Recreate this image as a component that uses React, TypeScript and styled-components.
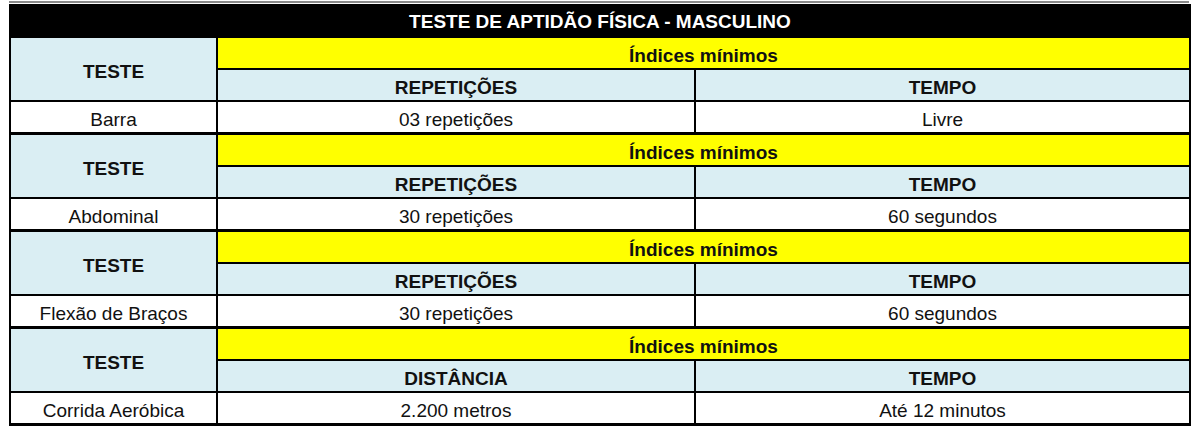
import styled, { createGlobalStyle } from "styled-components";

const GlobalStyle = createGlobalStyle`
  html, body {
    margin: 0;
    padding: 0;
    background: #ffffff;
  }
  body {
    font-family: "Liberation Sans", Arial, sans-serif;
    color: #111;
  }
`;

const Sheet = styled.div`
  width: 1180px;
  padding: 1px 0 0 9px;
`;

const TopRule = styled.div`
  height: 2px;
  background: #8a8a8a;
  margin-bottom: 1px;
`;

const Table = styled.table`
  width: 1180px;
  border-collapse: collapse;
  table-layout: fixed;
  font-size: 19px;
  line-height: 22px;
`;

const TitleCell = styled.th`
  background: #000;
  color: #fff;
  font-weight: bold;
  height: 26px;
  padding: 3px 0 0;
  border: 2px solid #000;
  text-align: center;
`;

const Cell = styled.td<{ $bg?: string; $bold?: boolean; $groupTop?: boolean; $last?: boolean }>`
  background: ${(p) => p.$bg ?? "#fff"};
  font-weight: ${(p) => (p.$bold ? "bold" : "normal")};
  text-align: center;
  vertical-align: middle;
  height: 24px;
  padding: 6px 0 0;
  border: 2px solid #000;
  border-top-width: ${(p) => (p.$groupTop ? "3px" : "2px")};
  border-bottom-width: ${(p) => (p.$last ? "3px" : "2px")};
  white-space: nowrap;
`;

const BLUE = "#daeef3";
const YELLOW = "#ffff00";

type Test = {
  name: string;
  measure: string;
  value: string;
  time: string;
};

const tests: Test[] = [
  { name: "Barra", measure: "REPETIÇÕES", value: "03 repetições", time: "Livre" },
  { name: "Abdominal", measure: "REPETIÇÕES", value: "30 repetições", time: "60 segundos" },
  { name: "Flexão de Braços", measure: "REPETIÇÕES", value: "30 repetições", time: "60 segundos" },
  { name: "Corrida Aeróbica", measure: "DISTÂNCIA", value: "2.200 metros", time: "Até 12 minutos" },
];

function TestGroup({ test, last }: { test: Test; last: boolean }) {
  return (
    <>
      <tr>
        <Cell rowSpan={2} $bg={BLUE} $bold $groupTop>
          TESTE
        </Cell>
        <Cell colSpan={2} $bg={YELLOW} $bold $groupTop>
          Índices mínimos
        </Cell>
      </tr>
      <tr>
        <Cell $bg={BLUE} $bold>
          {test.measure}
        </Cell>
        <Cell $bg={BLUE} $bold>
          TEMPO
        </Cell>
      </tr>
      <tr>
        <Cell $last={last}>{test.name}</Cell>
        <Cell $last={last}>{test.value}</Cell>
        <Cell $last={last}>{test.time}</Cell>
      </tr>
    </>
  );
}

export default function App() {
  return (
    <>
      <GlobalStyle />
      <Sheet>
        <TopRule />
        <Table>
          <colgroup>
            <col style={{ width: 207 }} />
            <col style={{ width: 478 }} />
            <col style={{ width: 495 }} />
          </colgroup>
          <thead>
            <tr>
              <TitleCell colSpan={3}>TESTE DE APTIDÃO FÍSICA - MASCULINO</TitleCell>
            </tr>
          </thead>
          <tbody>
            {tests.map((t, i) => (
              <TestGroup key={t.name} test={t} last={i === tests.length - 1} />
            ))}
          </tbody>
        </Table>
      </Sheet>
    </>
  );
}
